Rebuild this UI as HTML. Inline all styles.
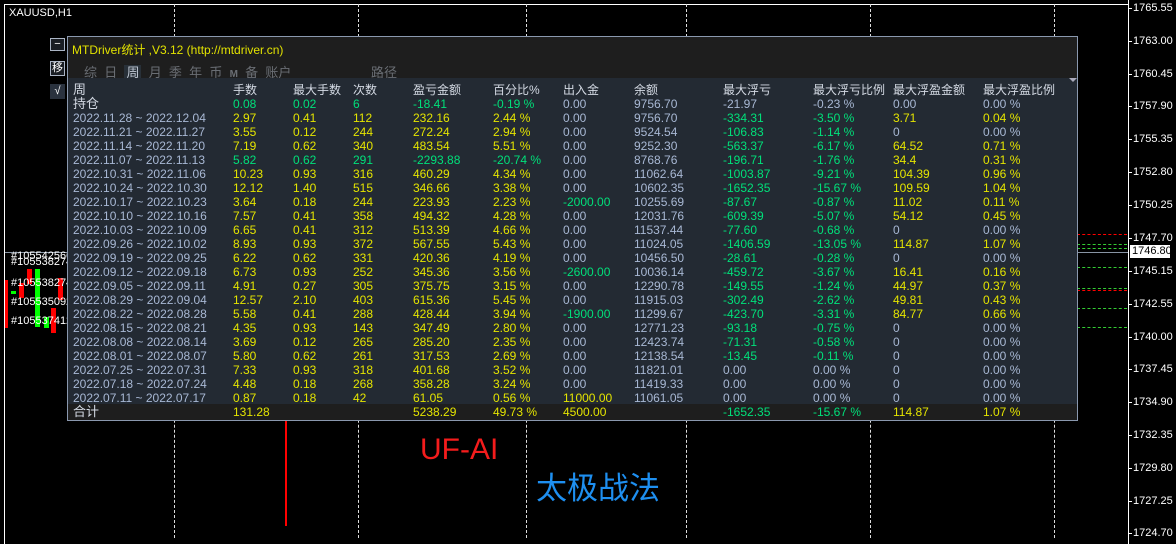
<!DOCTYPE html>
<html><head><meta charset="utf-8">
<style>
*{margin:0;padding:0;box-sizing:border-box}
body{width:1176px;height:538px;background:#000;position:relative;overflow:hidden;font-family:"Liberation Sans","Noto Sans CJK SC",sans-serif;font-size:12px;color:#c8d0dc}
.a{position:absolute;white-space:nowrap}
.vg{position:absolute;top:4px;width:0;height:534px;border-left:1px dashed #ddd}
.pl{position:absolute;left:1133px;font-size:11px;color:#fff;line-height:12px}
.tk{position:absolute;left:1128px;width:4px;height:1px;background:#fff}
.row{position:absolute;left:0;width:1008px;height:14px;line-height:14px;font-size:12px}
.row span{position:absolute;top:0}
.y{color:#e4e400}.g{color:#00e07a}.b{color:#a8b8d4}.h{color:#d4dae4}
.hl{position:absolute;height:0;border-top:1px dashed}
</style></head><body>
<div class="a" style="left:4px;top:4px;width:1125px;height:540px;border:1px solid #fff;border-bottom:none"></div>
<div class="a" style="left:9px;top:7px;color:#fff;font-size:11px">XAUUSD,H1</div>
<div class="vg" style="left:174px"></div><div class="vg" style="left:358px"></div><div class="vg" style="left:526px"></div><div class="vg" style="left:686px"></div><div class="vg" style="left:870px"></div><div class="vg" style="left:1054px"></div>
<div class="a" style="left:5px;top:252px;width:1123px;height:1px;background:#8894a4"></div>
<div class="a" style="left:5px;top:280px;width:3px;height:48px;background:#f00"></div>
<div class="a" style="left:11px;top:291px;width:5px;height:3px;background:#0f0"></div>
<div class="a" style="left:19px;top:283px;width:5px;height:15px;background:#f00"></div>
<div class="a" style="left:27px;top:269px;width:5px;height:15px;background:#f00"></div>
<div class="a" style="left:35px;top:269px;width:5px;height:58px;background:#0f0"></div>
<div class="a" style="left:51px;top:308px;width:5px;height:25px;background:#f00"></div>
<div class="a" style="left:44px;top:317px;width:5px;height:11px;background:#0f0"></div>
<div class="a" style="left:58px;top:278px;width:5px;height:22px;background:#f00"></div>
<div class="a" style="left:11px;top:250px;color:#fff;font-size:11px">#105542566</div>
<div class="a" style="left:11px;top:256px;color:#fff;font-size:11px">#105538274</div>
<div class="a" style="left:11px;top:277px;color:#fff;font-size:11px">#105538274</div>
<div class="a" style="left:11px;top:296px;color:#fff;font-size:11px">#105535092</div>
<div class="a" style="left:11px;top:315px;color:#fff;font-size:11px">#105537412</div>
<div class="hl" style="left:1077px;top:234px;width:50px;border-color:#f00"></div>
<div class="hl" style="left:1077px;top:244px;width:50px;border-color:#3c3"></div>
<div class="hl" style="left:1077px;top:248px;width:50px;border-color:#3c3"></div>
<div class="hl" style="left:1077px;top:267px;width:50px;border-color:#3c3"></div>
<div class="hl" style="left:1077px;top:288px;width:50px;border-color:#3c3"></div>
<div class="hl" style="left:1077px;top:290px;width:50px;border-color:#f00"></div>
<div class="hl" style="left:1077px;top:308px;width:50px;border-color:#3c3"></div>
<div class="hl" style="left:1077px;top:327px;width:50px;border-color:#3c3"></div>
<div class="a" style="left:1128px;top:0;width:1px;height:538px;background:#fff"></div>
<div class="tk" style="top:8px"></div><div class="pl" style="top:2px">1765.55</div>
<div class="tk" style="top:41px"></div><div class="pl" style="top:35px">1763.00</div>
<div class="tk" style="top:74px"></div><div class="pl" style="top:68px">1760.45</div>
<div class="tk" style="top:106px"></div><div class="pl" style="top:100px">1757.90</div>
<div class="tk" style="top:139px"></div><div class="pl" style="top:133px">1755.35</div>
<div class="tk" style="top:172px"></div><div class="pl" style="top:166px">1752.80</div>
<div class="tk" style="top:205px"></div><div class="pl" style="top:199px">1750.25</div>
<div class="tk" style="top:238px"></div><div class="pl" style="top:232px">1747.70</div>
<div class="a" style="left:1130px;top:245px;width:40px;height:13px;background:#fff;color:#000;font-size:11px;line-height:13px;padding-left:2px">1746.80</div>
<div class="tk" style="top:271px"></div><div class="pl" style="top:265px">1745.15</div>
<div class="tk" style="top:304px"></div><div class="pl" style="top:298px">1742.55</div>
<div class="tk" style="top:337px"></div><div class="pl" style="top:331px">1740.00</div>
<div class="tk" style="top:369px"></div><div class="pl" style="top:363px">1737.45</div>
<div class="tk" style="top:402px"></div><div class="pl" style="top:396px">1734.90</div>
<div class="tk" style="top:435px"></div><div class="pl" style="top:429px">1732.35</div>
<div class="tk" style="top:468px"></div><div class="pl" style="top:462px">1729.80</div>
<div class="tk" style="top:501px"></div><div class="pl" style="top:495px">1727.25</div>
<div class="tk" style="top:533px"></div><div class="pl" style="top:527px">1724.70</div>
<div class="a" style="left:285px;top:420px;width:2px;height:106px;background:#ff0000"></div>
<div class="a" style="left:420px;top:432px;color:#f41c1c;font-size:30px;line-height:36px">UF-AI</div>
<div class="a" style="left:536px;top:470px;color:#1e8ff0;font-size:31px;line-height:38px">太极战法</div>
<div class="a" style="left:50px;top:38px;width:15px;height:13px;border:1px solid #aab4c4;background:#1a1e24;color:#fff;font-size:11px;line-height:10px;text-align:center">−</div>
<div class="a" style="left:50px;top:61px;width:15px;height:15px;border:1px solid #aab4c4;background:#1a1e24;color:#fff;font-size:11px;line-height:13px;text-align:center">移</div>
<div class="a" style="left:50px;top:84px;width:15px;height:15px;background:#2a323e;color:#fff;font-size:11px;line-height:15px;text-align:center">√</div>
<div class="a" style="left:67px;top:36px;width:1011px;height:385px;border:1px solid #8a98ae;background:#1e1e1e;overflow:hidden">
 <div class="a" style="left:4px;top:4px;color:#e2e200;font-size:12px">MTDriver统计 ,V3.12 (http://mtdriver.cn)</div>
 <div class="a" style="left:16px;top:25px;color:#6a6e74;font-size:13px">综&nbsp;&nbsp;日&nbsp;&nbsp;<span style="background:#283038;color:#c0c8d4;padding:0 2px">周</span>&nbsp;&nbsp;月&nbsp;&nbsp;季&nbsp;&nbsp;年&nbsp;&nbsp;币&nbsp;&nbsp;<b style="font-size:10px">M</b>&nbsp;&nbsp;备&nbsp;&nbsp;账户</div>
 <div class="a" style="left:303px;top:25px;color:#6a6e74;font-size:13px">路径</div>
 <div class="a" style="left:0;top:41px;width:1010px;height:326px;background:#232a33"></div>
 <div class="a" style="left:1001px;top:41px;width:0;height:0;border-left:4px solid transparent;border-right:4px solid transparent;border-top:4px solid #aab"></div>
 <div id="rows" class="a" style="left:5px;top:45px;width:1005px;height:340px"></div>
</div>
<script>
var cols=[0,160,220,280,340,420,490,561,650,740,820,910];
var rows=[
["h","周","手数","最大手数","次数","盈亏金额","百分比%","出入金","余额","最大浮亏","最大浮亏比例","最大浮盈金额","最大浮盈比例"],
["p","持仓","0.08","0.02","6","-18.41","-0.19 %","0.00","9756.70","-21.97","-0.23 %","0.00","0.00 %"],
["w","2022.11.28 ~ 2022.12.04","2.97","0.41","112","232.16","2.44 %","0.00","9756.70","-334.31","-3.50 %","3.71","0.04 %"],
["w","2022.11.21 ~ 2022.11.27","3.55","0.12","244","272.24","2.94 %","0.00","9524.54","-106.83","-1.14 %","0","0.00 %"],
["w","2022.11.14 ~ 2022.11.20","7.19","0.62","340","483.54","5.51 %","0.00","9252.30","-563.37","-6.17 %","64.52","0.71 %"],
["l","2022.11.07 ~ 2022.11.13","5.82","0.62","291","-2293.88","-20.74 %","0.00","8768.76","-196.71","-1.76 %","34.4","0.31 %"],
["w","2022.10.31 ~ 2022.11.06","10.23","0.93","316","460.29","4.34 %","0.00","11062.64","-1003.87","-9.21 %","104.39","0.96 %"],
["w","2022.10.24 ~ 2022.10.30","12.12","1.40","515","346.66","3.38 %","0.00","10602.35","-1652.35","-15.67 %","109.59","1.04 %"],
["w","2022.10.17 ~ 2022.10.23","3.64","0.18","244","223.93","2.23 %","-2000.00","10255.69","-87.67","-0.87 %","11.02","0.11 %"],
["w","2022.10.10 ~ 2022.10.16","7.57","0.41","358","494.32","4.28 %","0.00","12031.76","-609.39","-5.07 %","54.12","0.45 %"],
["w","2022.10.03 ~ 2022.10.09","6.65","0.41","312","513.39","4.66 %","0.00","11537.44","-77.60","-0.68 %","0","0.00 %"],
["w","2022.09.26 ~ 2022.10.02","8.93","0.93","372","567.55","5.43 %","0.00","11024.05","-1406.59","-13.05 %","114.87","1.07 %"],
["w","2022.09.19 ~ 2022.09.25","6.22","0.62","331","420.36","4.19 %","0.00","10456.50","-28.61","-0.28 %","0","0.00 %"],
["w","2022.09.12 ~ 2022.09.18","6.73","0.93","252","345.36","3.56 %","-2600.00","10036.14","-459.72","-3.67 %","16.41","0.16 %"],
["w","2022.09.05 ~ 2022.09.11","4.91","0.27","305","375.75","3.15 %","0.00","12290.78","-149.55","-1.24 %","44.97","0.37 %"],
["w","2022.08.29 ~ 2022.09.04","12.57","2.10","403","615.36","5.45 %","0.00","11915.03","-302.49","-2.62 %","49.81","0.43 %"],
["w","2022.08.22 ~ 2022.08.28","5.58","0.41","288","428.44","3.94 %","-1900.00","11299.67","-423.70","-3.31 %","84.77","0.66 %"],
["w","2022.08.15 ~ 2022.08.21","4.35","0.93","143","347.49","2.80 %","0.00","12771.23","-93.18","-0.75 %","0","0.00 %"],
["w","2022.08.08 ~ 2022.08.14","3.69","0.12","265","285.20","2.35 %","0.00","12423.74","-71.31","-0.58 %","0","0.00 %"],
["w","2022.08.01 ~ 2022.08.07","5.80","0.62","261","317.53","2.69 %","0.00","12138.54","-13.45","-0.11 %","0","0.00 %"],
["w","2022.07.25 ~ 2022.07.31","7.33","0.93","318","401.68","3.52 %","0.00","11821.01","0.00","0.00 %","0","0.00 %"],
["w","2022.07.18 ~ 2022.07.24","4.48","0.18","268","358.28","3.24 %","0.00","11419.33","0.00","0.00 %","0","0.00 %"],
["w","2022.07.11 ~ 2022.07.17","0.87","0.18","42","61.05","0.56 %","11000.00","11061.05","0.00","0.00 %","0","0.00 %"],
["t","合计","131.28","","","5238.29","49.73 %","4500.00","","-1652.35","-15.67 %","114.87","1.07 %"]
];
var h="";
rows.forEach(function(r,i){
 var top=i==0?1:(i==1?15:(r[0]=="t"?323:i*14+1));
 h+='<div class="row" style="top:'+top+'px">';
 for(var c=1;c<r.length;c++){
  var v=r[c],cl="b",fs="";
  if(r[0]=="h")cl="h";
  else if(c==1)cl=(r[0]=="p"||r[0]=="t")?"h":"b";
  else if(r[0]=="p")cl=c<=6?"g":"b";
  else if(r[0]=="t")cl=(c>=9&&c<=10)?"g":"y";
  else if(c<=6)cl=r[0]=="l"?"g":"y";
  else if(c==7)cl=v[0]=="-"?"g":(v=="0.00"?"b":"y");
  else if(c==8)cl="b";
  else if(c==9||c==10)cl=v[0]=="-"?"g":"b";
  else cl=(parseFloat(v)>0)?"y":"b";
  if(c==1&&(r[0]=="h"||r[0]=="p"||r[0]=="t"))fs="font-size:13px;";
  h+='<span class="'+cl+'" style="'+fs+'left:'+cols[c-1]+'px">'+v+'</span>';
 }
 h+='</div>';
});
document.getElementById("rows").innerHTML=h;
</script>
</body></html>
